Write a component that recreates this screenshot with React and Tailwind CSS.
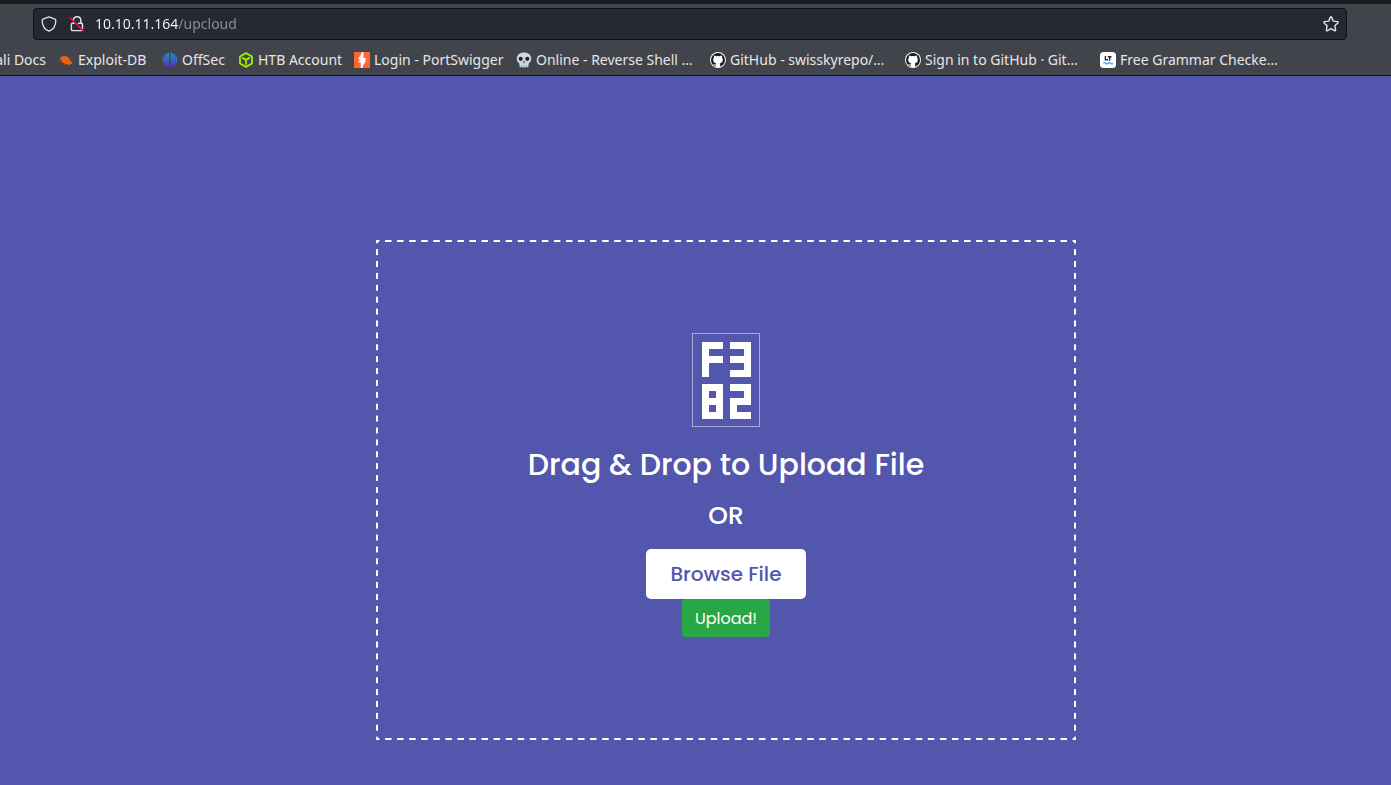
import React from "react";

const ICON = "h-4 w-4 shrink-0";

function ShieldIcon() {
  return (
    <svg viewBox="0 0 16 16" className={ICON} fill="none" stroke="#e4e4e8" strokeWidth="1.3" strokeLinejoin="round">
      <path d="M8 .8 14 3.2Q14.8 3.5 14.8 4.4C14.8 9.800 12.200 13.400 8 15.200C3.800 13.400 1.200 9.800 1.200 4.400Q1.200 3.500 2 3.200Z" />
    </svg>
  );
}

function InsecureLockIcon() {
  return (
    <svg viewBox="0 0 16 16" className={ICON} fill="none" strokeLinecap="round" strokeLinejoin="round">
      <g stroke="#e4e4e8" strokeWidth="1.4">
        <path d="M4.300 4.300C4.300 2.200 5.800.8 8 .8s3.800 1.400 3.800 3.600V7" />
        <path d="M9.500 7.200h2.800c.8 0 1.200.5 1.200 1.200v4" />
        <path d="M5 7.200H3.600c-.8 0-1.200.5-1.200 1.200v5c0 .8.400 1.200 1.200 1.200h8.800" />
      </g>
      <path d="M1.400 1.900 14.200 14.800" stroke="#ff0f45" strokeWidth="1.400" />
    </svg>
  );
}

function StarIcon() {
  return (
    <svg viewBox="0 0 16 16" className={ICON} fill="none" stroke="#e4e4e8" strokeWidth="1.4" strokeLinejoin="round">
      <path d="M7.300 1.400Q8 .2 8.700 1.400L10.300 5.100 14.400 5.600Q15.700 5.900 14.800 6.900L11.900 9.700 12.600 13.900Q12.700 15.200 11.500 14.700L8 12.700 4.500 14.700Q3.300 15.200 3.400 13.900L4.100 9.700 1.200 6.900Q.3 5.900 1.600 5.600L5.700 5.100Z" />
    </svg>
  );
}

function ExploitIcon() {
  return (
    <svg viewBox="0 0 16 16" className={ICON}>
      <path d="M1.500 5.500 3.700 5 5 3.800 8 4.300 10.300 5.800 12.400 8.200 14.800 12.500 12.400 12 10.800 13.200 9.600 12.200 6.700 11.800 5.200 10.500 3.200 10.500 4 9.200 2.800 7.500Z" fill="#ec6210" />
      <path d="M2.500 3.500 4.800 5M9.500 3.300l.4 2.200M1 8.800l3-.2M11 6.200l2.600-.5M12 9l3-.5M7 12l-.7 1" stroke="#a9541f" strokeWidth=".7" />
    </svg>
  );
}

function OffSecIcon() {
  return (
    <svg viewBox="0 0 16 16" className={ICON}>
      <defs>
        <linearGradient id="offsec" gradientUnits="userSpaceOnUse" x1="0" y1="0" x2="0" y2="16">
          <stop stopColor="#13a1dc" />
          <stop offset=".5" stopColor="#3468d8" />
          <stop offset="1" stopColor="#6a20d0" />
        </linearGradient>
      </defs>
      <g fill="url(#offsec)">
        <path d="M7.200.5V15.500L5.200 14.700V1.300Z" />
        <path d="M8.800.5V15.500L10.800 14.700V1.300Z" />
        <path d="M4.900 1.500V14.500L2.800 13V3Z" />
        <path d="M11.100 1.500V14.500L13.200 13V3Z" />
        <path d="M2.500 3.400V12.600C-.2 9.800-.2 6.200 2.500 3.400Z" />
        <path d="M13.500 3.400V12.600C16.200 9.800 16.200 6.200 13.500 3.400Z" />
      </g>
    </svg>
  );
}

function CubeIcon() {
  return (
    <svg viewBox="0 0 16 16" className={ICON} fill="none" stroke="#9fef00" strokeWidth="1.800" strokeLinejoin="round" strokeLinecap="round">
      <path d="M8 1.100 14 4.500V11.500L8 14.900 2 11.500V4.500Z" />
      <path d="M4.600 5.900 8 7.900 11.400 5.900M8 7.900V12" />
    </svg>
  );
}

function PortSwiggerIcon() {
  return (
    <svg viewBox="0 0 16 16" className={ICON}>
      <path d="M0 0h16v16H0z" fill="#ff6633" />
      <path d="M9.500 0V5.900H12.600L8.900 10.500H6.600L8.200 7.300H3.900L7.600 1.500V0Z" fill="#fff" />
      <path d="M6.800 16V10.200H3.900L7.500 6H9.600L8.200 8.600H12.200L8.800 14V16Z" fill="#fff" />
    </svg>
  );
}

function SkullIcon() {
  return (
    <svg viewBox="0 0 16 16" className={ICON}>
      <path d="M8 .4C3.500.4.8 3 .8 6.500c0 2 .5 3.200 1.700 4.200.7.500 1 1 1 1.800v1.800c0 1 1.500 1.400 2.200.5.600 1 2 1 2.300.1.300.9 1.700.9 2.300-.1.700.9 2.200.5 2.200-.5v-1.800c0-.8.300-1.300 1-1.800 1.200-1 1.700-2.200 1.700-4.200C15.200 3 12.500.4 8 .4Z" fill="#ccd9e1" />
      <path d="M6.900 10.600 8 8.800l1.100 1.800ZM5.700 13v2M8 13v2M10.300 13v2" fill="#20272c" stroke="#6e7d86" strokeWidth=".5" />
      <circle cx="4.700" cy="6.800" r="2.100" fill="#20272c" />
      <circle cx="11.300" cy="6.800" r="2.100" fill="#20272c" />
    </svg>
  );
}

function GitHubIcon() {
  return (
    <svg viewBox="0 0 16 16" className={ICON}>
      <circle cx="8" cy="8" r="8" fill="#f4f4f4" />
      <circle cx="8" cy="8" r="7" fill="#1b1f23" />
      <path d="M5.800 15v-1.600c-1.500.2-2-.5-2.400-1.300.9-.2 1.200.7 2.400.5.100-.5.200-.8.500-1.100C4.500 11.200 3.200 10.300 3.200 7.600c0-.9.300-1.500.8-2.100-.2-.7-.1-1.500.1-2 .9.100 1.500.4 2.100.8a8 8 0 0 1 3.600 0c.6-.4 1.200-.7 2.100-.8.200.5.300 1.300.1 2 .5.600.8 1.200.8 2.100 0 2.700-1.300 3.600-3.100 3.900.4.400.5.900.5 1.600V15c-1.400.5-3 .5-4.400 0Z" fill="#fff" />
    </svg>
  );
}

function GrammarIcon() {
  return (
    <svg viewBox="0 0 16 16" className={ICON} fill="none">
      <rect width="16" height="16" rx="3.500" fill="#fff" />
      <path d="M5.400 4v3.800H8M7.800 4.700h3.700M9.600 4.700v4" stroke="#2b2b35" strokeWidth="1.400" />
      <path d="M3.300 11.300q1.200-1.300 2.400 0t2.400 0 2.400 0 2.400 0" stroke="#45a1fc" strokeWidth="1.300" />
    </svg>
  );
}

const bookmarks = [
  { label: "Exploit-DB", Icon: ExploitIcon, width: "w-[92px]" },
  { label: "OffSec", Icon: OffSecIcon, width: "w-16" },
  { label: "HTB Account", Icon: CubeIcon, width: "w-[104px]" },
  { label: "Login - PortSwigger", Icon: PortSwiggerIcon, width: "w-[150px]" },
  { label: "Online - Reverse Shell …", Icon: SkullIcon, width: "w-[182px]" },
  { label: "GitHub - swisskyrepo/…", Icon: GitHubIcon, width: "w-[183px]" },
  { label: "Sign in to GitHub · Git…", Icon: GitHubIcon, width: "w-[183px]" },
  { label: "Free Grammar Checke…", Icon: GrammarIcon, width: "w-[183px]" },
];

const digits = [
  { x: 9, y: 8, rows: ["111", "100", "111", "100", "100"] },
  { x: 37, y: 8, rows: ["111", "001", "111", "001", "111"] },
  { x: 9, y: 50, rows: ["111", "101", "111", "101", "111"] },
  { x: 37, y: 50, rows: ["111", "001", "111", "100", "111"] },
];

function CodePointIcon() {
  return (
    <svg width="68" height="94" viewBox="-1 -1 68 94" role="img" aria-label="Upload icon" shapeRendering="crispEdges">
      <rect x="-.5" y="-.5" width="67" height="93" fill="none" stroke="#a9abd6" />
      {digits.map((d) =>
        d.rows.flatMap((row, r) =>
          [...row].map((c, i) =>
            c === "1" ? <rect key={`${d.x}-${d.y}-${r}-${i}`} x={d.x + i * 7} y={d.y + r * 7} width="7" height="7" fill="#fff" /> : null
          )
        )
      )}
    </svg>
  );
}

const dashed =
  "[background-image:linear-gradient(90deg,transparent_25%,white_25%_75%,transparent_75%),linear-gradient(90deg,transparent_25%,white_25%_75%,transparent_75%),linear-gradient(transparent_25%,white_25%_75%,transparent_75%),linear-gradient(transparent_25%,white_25%_75%,transparent_75%)] [background-size:12px_2px,12px_2px,2px_12px,2px_12px] [background-position:top,bottom,left,right] [background-repeat:round_no-repeat,round_no-repeat,no-repeat_round,no-repeat_round]";

export default function App() {
  return (
    <div className="flex min-h-screen flex-col overflow-hidden bg-[#5256ad]">
      <header className="border-t-4 border-b border-t-[#1a1b20] border-b-[#101014] bg-[#42444c] pt-1 font-['Noto_Sans',sans-serif] text-sm">
        <div className="mr-11 ml-[33px] flex h-8 items-center rounded border border-[#0f1015] bg-[#272932] px-[7px]">
          <ShieldIcon />
          <span className="ml-3 flex">
            <InsecureLockIcon />
          </span>
          <input
            type="text"
            aria-label="Address"
            defaultValue="10.10.11.164/upcloud"
            className="ml-[10px] min-w-0 flex-1 bg-[linear-gradient(90deg,#fbfbfe_83px,#8f9097_83px)] bg-clip-text text-transparent caret-white outline-none"
          />
          <button type="button" aria-label="Bookmark this page">
            <StarIcon />
          </button>
        </div>
        <nav aria-label="Bookmarks" className="flex h-[35px] items-center gap-3 overflow-hidden pt-1 whitespace-nowrap text-[#e6e6e8]">
          <a href="#docs" className="flex w-[46px] shrink-0 justify-end">
            Kali Docs
          </a>
          {bookmarks.map(({ label, Icon, width }) => (
            <a key={label} href="#bookmark" className={`flex shrink-0 items-center gap-1 ${width}`}>
              <Icon />
              {label}
            </a>
          ))}
        </nav>
      </header>
      <main className="flex flex-1 items-start justify-center pt-[164px] pb-11 pl-[61px] font-['Poppins','Inter',sans-serif] text-white">
        <section className={`flex min-h-[500px] w-full max-w-[700px] flex-col items-center justify-center pb-[10px] ${dashed}`}>
          <CodePointIcon />
          <h1 className="mt-5 text-3xl leading-9 font-medium">Drag &amp; Drop to Upload File</h1>
          <p className="my-[15px] text-[25px] leading-9 font-medium">OR</p>
          <button type="button" className="h-[50px] w-40 rounded-[5px] bg-white text-xl font-medium text-[#5256ad]">
            Browse File
          </button>
          <button type="button" className="h-[38px] rounded bg-[#28a745] px-[13px] pt-0.5 text-base">
            Upload!
          </button>
        </section>
      </main>
    </div>
  );
}
